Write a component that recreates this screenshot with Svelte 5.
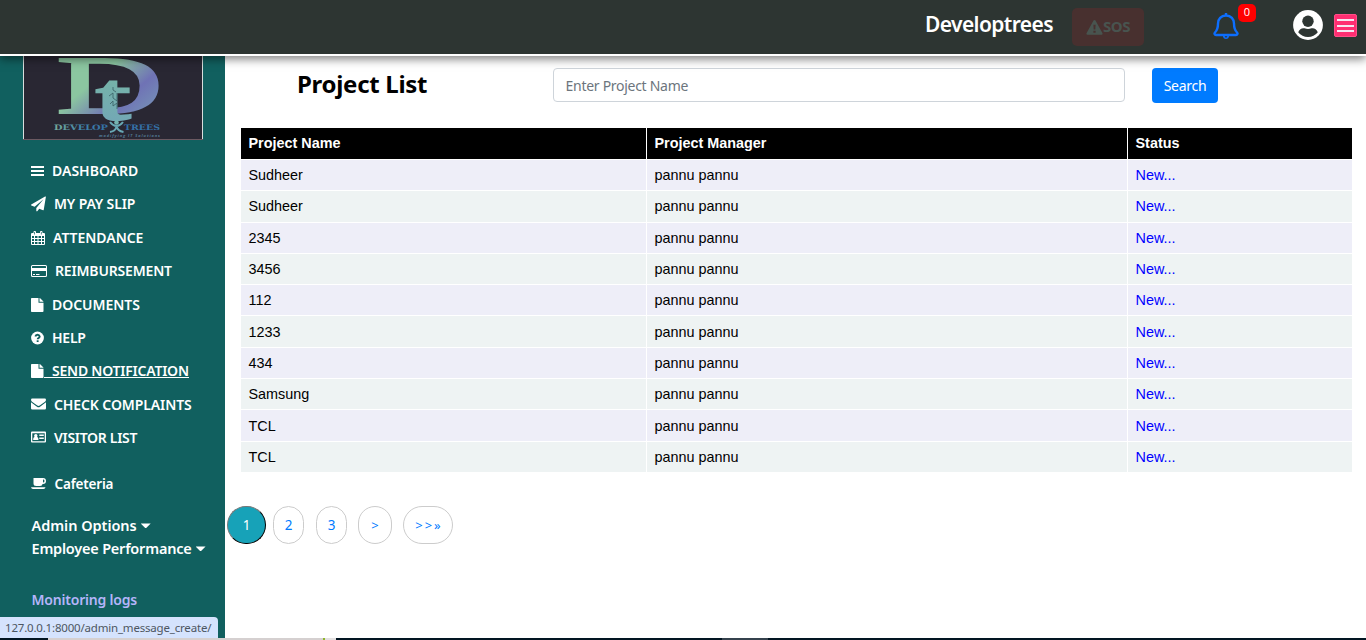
<script>
  const links = [
    { icon: 'bars', label: 'DASHBOARD', gap: 8, w: 13, ls: 0 },
    { icon: 'plane', label: 'MY PAY SLIP', gap: 8, w: 15, ls: -0.15 },
    { icon: 'calendar', label: 'ATTENDANCE', gap: 8, w: 14, ls: -0.04 },
    { icon: 'card', label: 'REIMBURSEMENT', gap: 8, w: 16, ls: -0.17 },
    { icon: 'file', label: 'DOCUMENTS', gap: 8, w: 13, ls: -0.05 },
    { icon: 'help', label: 'HELP', gap: 8, w: 13, ls: -0.25 },
    { icon: 'file', label: 'SEND NOTIFICATION', gap: 8, w: 13, ls: -0.23, hovered: true },
    { icon: 'mail', label: 'CHECK COMPLAINTS', gap: 8, w: 15, ls: -0.1 },
    { icon: 'idcard', label: 'VISITOR LIST', gap: 8, w: 15, ls: -0.3 }
  ];
  const projects = ['Sudheer', 'Sudheer', '2345', '3456', '112', '1233', '434', 'Samsung', 'TCL', 'TCL'];
</script>

{#snippet glyph(name)}
  <svg class="glyph" width="16" height="16" viewBox="0 0 16 16" fill="#fff">
    {#if name === 'bars'}
      <path d="M0 3h13v2H0zM0 7h13v2H0zM0 11h13v2H0z" />
    {:else if name === 'plane'}
      <path transform="translate(0 .5) scale(.0083)" d="M1764 11q33 24 27 64l-256 1536q-5 29-32 45-14 8-31 8-11 0-24-5l-453-185-242 295q-18 23-49 23-13 0-22-4-19-7-30.5-23.5t-11.500-36.500v-349l864-1059-1069 925-395-162q-37-14-40-55-2-40 32-59l1664-960q15-9 32-9 20 0 36 11z" />
    {:else if name === 'calendar'}
      <path fill-rule="evenodd" d="M1 3h1.500V2q0-1 1-1h.5q1 0 1 1v1h4V2q0-1 1-1h.5q1 0 1 1v1H13q1 0 1 1v10q0 1-1 1H1q-1 0-1-1V4q0-1 1-1zM1 6v2h2V6zm3 0v2h2.500V6zm3.500 0v2H10V6zM11 6v2h2V6zM1 9v2h2V9zm3 0v2h2.500V9zm3.500 0v2H10V9zM11 9v2h2V9zM1 12v2h2v-2zm3 0v2h2.500v-2zm3.500 0v2H10v-2zm3.500 0v2h2v-2z" />
      <path d="M3.200 2h.7v2.500h-.7zM9.900 2h.7v2.500h-.7z" fill="#11605f" />
    {:else if name === 'card'}
      <path fill-rule="evenodd" d="M1.500 2h13Q16 2 16 3.500v9q0 1.500-1.500 1.500h-13Q0 14 0 12.500v-9Q0 2 1.500 2zM1 3.500V5h14V3.500L14.500 3h-13zM1 8v4.500l.5.5h13l.5-.5V8zM2 11h2v1H2zm3 0h3.500v1H5z" />
    {:else if name === 'file'}
      <path d="M0 1.800Q0 1 .8 1H7.500v4.700h5V14q0 1-.8 1H.8Q0 15 0 14.200zM8.500 1q.5 0 1 .5l2.700 2.700q.3.300.3.600H8.500z" />
    {:else if name === 'help'}
      <circle cx="6.500" cy="8" r="6.400" />
      <path d="M4.400 6.500Q4.700 4.700 6.500 4.700T8.700 6.500Q8.700 7.400 7.500 8.100 6.700 8.500 6.700 9.300" fill="none" stroke="#11605f" stroke-width="1.900" />
      <path d="M5.700 10.300h1.900V12H5.700z" fill="#11605f" />
    {:else if name === 'mail'}
      <path d="M1.200 1.500h12.600Q15 1.500 15 2.800 15 4 13.700 5L8.700 8.600Q7.500 9.300 6.300 8.600L1.300 5Q0 4 0 2.800 0 1.500 1.200 1.500z" />
      <path d="M0 5.300l6 4.400q1.500 1 3 0l6-4.400v6q0 1.200-1.200 1.200H1.200Q0 12.500 0 11.300z" />
    {:else if name === 'idcard'}
      <path fill-rule="evenodd" d="M1 1.500h13q1 0 1 1v9q0 1-1 1H1q-1 0-1-1v-9q0-1 1-1zM1.300 3.200v8h12.400v-8z" />
      <circle cx="4.800" cy="5.700" r="1.700" />
      <path d="M2.200 10V8.800Q2.500 7.200 3.600 7h2.400q1.200.2 1.400 1.800V10zM8.300 4.500H12.800V6H8.300zM8.300 7.500h4.500V9H8.300z" />
    {:else if name === 'cup'}
      <path fill-rule="evenodd" d="M2.500 2H12q3 .1 3 2.900T12 8h-.4q-.4 2-2.500 2H5.200Q2.500 10 2.500 7.500zM12 3.500v3q1.500-.1 1.500-1.600T12 3.500zM0 11.300h14.500Q14.200 13 12.500 13H2Q.3 13 0 11.300z" />
    {/if}
  </svg>
{/snippet}

<div class="page">
  <header>
    <div class="brand">Developtrees</div>
    <button class="sos">
      <svg width="17" height="15" viewBox="0 0 17 15"><path d="M8.500 0q.7 0 1 .6l7 12.600q.5 1.300-.8 1.500H1.300Q0 14.500.5 13.200L7.500.6Q7.800 0 8.500 0z" fill="#48544f" /><path d="M7.400 4.800h2.200l-.3 4.700H7.700zM7.400 10.800h2.200v2H7.400z" fill="#48302f" /></svg><span>SOS</span>
    </button>
    <div class="bell">
      <svg width="26" height="28" viewBox="0 0 26 28" fill="none" stroke="#0d6efd" stroke-width="2.400" stroke-linejoin="round">
        <path d="M13 1v3M13 3.500C8 3.500 5 7 5 11.500c0 5-1.300 7.300-3 9-1 1.100-.4 2.500 1 2.500h20c1.400 0 2-1.400 1-2.500-1.700-1.700-3-4-3-9 0-4.500-3-8-8-8z" />
        <path d="M9.800 23.500q.4 3.500 3.200 3.500t3.200-3.500z" fill="#0d6efd" stroke="none" /><path d="M11.700 24.200h2.600q-.2 1.200-1.300 1.200t-1.300-1.200z" fill="#2d3532" stroke="none" />
      </svg>
      <span class="badge">0</span>
    </div>
    <svg class="user" width="30" height="30" viewBox="0 0 30 30"><circle cx="15" cy="15" r="14.900" fill="#fff" /><circle cx="15" cy="11.200" r="5.700" fill="#2d3532" /><path d="M5.200 22.200Q7.300 17.500 11.500 18.300q3.500 1.200 7 0 4.200-.8 6.300 3.900Q21 27 15 27T5.200 22.200z" fill="#2d3532" /></svg>
    <div class="menu"><i></i><i></i><i></i></div>
  </header>

  <div class="body">
    <aside>
      <svg class="logo" width="180" height="84" viewBox="0 0 180 84">
        <defs>
          <linearGradient id="letter" x1="0" y1="0" x2="1" y2="1"><stop offset=".4" stop-color="#8bc6a0" /><stop offset=".65" stop-color="#6f72b5" /><stop offset="1" stop-color="#7aa9b9" /></linearGradient>
          <linearGradient id="stem" x1="0" y1="0" x2="0" y2="1"><stop offset="0" stop-color="#77b8a4" /><stop offset="1" stop-color="#72a5b8" /></linearGradient>
          <linearGradient id="name" x1="0" x2="1"><stop offset="0" stop-color="#78aa98" /><stop offset=".5" stop-color="#4185ac" /><stop offset="1" stop-color="#326da5" /></linearGradient>
        </defs>
        <rect width="180" height="84" fill="#292733" />
        <path d="M.5 0v83.500M179.500 0v83.500" stroke="#d9dedd" />
        <path d="M0 83.500h180" stroke="#6b5961" />
        <text transform="translate(33.500 57) scale(1.790 1)" font-size="82" font-family="Liberation Serif" fill="url(#letter)" stroke="url(#letter)" stroke-width="2.200">D</text>
        <text transform="translate(74 63) scale(1.800 1)" font-size="65" font-family="Liberation Serif" fill="url(#stem)" stroke="url(#stem)" stroke-width="3">t</text>
        <path d="M86 40l4-3v5l4 3v-8M87 48l3-3v5l4-3v6M90 31v3l3 2" fill="none" stroke="#385f64" stroke-width=".8" />
        <text x="31" y="73.500" font-size="7.500" font-weight="700" font-family="DejaVu Serif" fill="url(#name)" textLength="54" lengthAdjust="spacingAndGlyphs">DEVELOP</text>
        <text x="101" y="73.500" font-size="7.500" font-weight="700" font-family="DejaVu Serif" fill="#3470a7" textLength="36" lengthAdjust="spacingAndGlyphs">TREES</text>
        <circle cx="93.500" cy="66.500" r="2.300" fill="#75b4b1" />
        <path d="M87 66q3 4 6.500 4t6.500-4M87 76q6-1 6.500-6 1 5 7 6" fill="none" stroke="#68a8b5" stroke-width="2" />
        <text x="76" y="80.500" font-size="4" font-style="italic" font-weight="700" font-family="Open Sans" fill="#527a94" textLength="61">modifying IT Solutions</text>
      </svg>

      <nav>
        {#each links as l}
          <a class:hovered={l.hovered}>
            <span class="icon" style:width="{l.w}px">{@render glyph(l.icon)}</span><span class="text" style:padding-left="{l.gap}px" style:letter-spacing="{l.ls}px">{l.label}</span>
          </a>
        {/each}
      </nav>
      <a class="cafe"><span class="icon">{@render glyph('cup')}</span><span>Cafeteria</span></a>
      <div class="drop first">Admin Options<i></i></div>
      <div class="drop second">Employee Performance<i></i></div>
      <div class="logs">Monitoring logs</div>
      <div class="status">127.0.0.1:8000/admin_message_create/</div>
    </aside>

    <main>
      <div class="search">
        <h1>Project List</h1>
        <input placeholder="Enter Project Name" />
        <button>Search</button>
      </div>
      <div class="table">
        <div class="row head"><div>Project Name</div><div>Project Manager</div><div>Status</div></div>
        {#each projects as p}
          <div class="row"><div>{p}</div><div>pannu pannu</div><div class="new">New...</div></div>
        {/each}
      </div>
      <div class="pages">
        <span class="on">1</span><span class="p2">2</span><span class="p3">3</span><span class="next">&gt;</span><span class="last">&gt;&gt;»</span>
      </div>
    </main>
  </div>
  <footer><i class="dark"></i><i class="light"></i><i class="green"></i><i class="pale"></i><i class="navy"></i><i class="grey"></i><i class="rest"></i></footer>
</div>

<style>
  :global(body) { margin: 0; overflow: hidden; }
  * { box-sizing: border-box; }
  .page { width: 1366px; height: 640px; display: flex; flex-direction: column; background: #fff; font-family: "Noto Sans", "Open Sans", sans-serif; overflow: hidden; }
  header { height: 56px; flex: none; background: #2d3532; border-bottom: 2px solid #fff; box-shadow: 0 3px 9px rgba(0, 0, 0, .5); display: flex; align-items: flex-start; position: relative; z-index: 2; }
  .brand { margin: 9px 0 0 925px; width: 147px; font-size: 21px; line-height: 30px; font-weight: 600; letter-spacing: -.6px; color: #fff; white-space: nowrap; }
  .sos { margin-top: 8px; width: 72px; height: 38px; border: 0; border-radius: 5px; background: #48302f; color: #48544f; font: 700 15px/36px "Noto Sans", sans-serif; letter-spacing: -.5px; padding: 0; display: flex; align-items: center; justify-content: center; }
  .sos span { height: 38px; }
  .bell { margin: 12px 0 0 69px; width: 80px; position: relative; height: 28px; }
  .bell svg { display: block; }
  .badge { position: absolute; left: 25px; top: -8px; width: 18px; height: 18px; border-radius: 5px; background: #f00; color: #fff; font: 11px/15px "Open Sans", sans-serif; text-align: center; }
  .user { margin-top: 10px; }
  .menu { margin: 14px 0 0 11px; width: 23px; height: 23px; border: 1px solid #ff4f88; border-radius: 2px; background: #ff2e72; padding: 4px 2px; display: flex; flex-direction: column; justify-content: space-between; }
  .menu i { height: 2px; flex: none; background: #f5e6f2; }
  .body { height: 582px; flex: none; display: flex; }
  aside { width: 225px; background: #11605f; color: #fff; display: flex; flex-direction: column; flex: none; }
  .logo { margin-left: 23px; flex: none; display: block; }
  nav { margin-top: 14.400px; height: 300px; display: grid; grid-template-rows: repeat(9, 33.370px); }
  nav a { margin-left: 31px; display: flex; align-items: center; font-size: 14px; font-weight: 600; white-space: nowrap; line-height: 20px; }
  .icon { flex: none; height: 16px; }
  .glyph { display: block; overflow: visible; }
  .hovered { position: relative; }
  .hovered::after { content: ""; position: absolute; left: 13px; width: 145px; bottom: 10px; height: 1px; background: #fff; }
  .cafe { margin: 20px 0 0 31px; height: 20px; display: flex; align-items: center; font-size: 13.500px; font-weight: 600; letter-spacing: -.18px; }
  .cafe .icon { width: 23.500px; }
  .drop { margin-left: 31.500px; height: 23px; line-height: 23px; font-size: 14.500px; font-weight: 600; white-space: nowrap; display: flex; align-items: center; }
  .drop i { margin-left: 4px; width: 10px; height: 5px; background: #fff; clip-path: polygon(0 0, 100% 0, 50% 100%); }
  .first { margin-top: 20px; letter-spacing: -.04px; }
  .second { letter-spacing: -.21px; }
  .logs { margin: 30px 0 0 31.500px; height: 20px; font-size: 14px; line-height: 20px; font-weight: 600; letter-spacing: -.2px; color: #b5b5fa; }
  .status { margin-top: auto; width: 218px; height: 21px; background: #d5e3fd; border-radius: 0 4px 0 0; padding-left: 5px; font: 11.500px/21px "Noto Sans", sans-serif; letter-spacing: -.19px; color: #4d5661; white-space: nowrap; }
  main { flex: 1; min-width: 0; }
  .search { display: flex; align-items: flex-start; padding: 12px 0 0 72px; height: 72px; }
  h1 { margin: -1px 0 0; width: 256px; font-size: 24px; line-height: 33px; font-weight: 700; letter-spacing: -.3px; color: #000; }
  input { width: 572px; height: 34px; border: 1px solid #ced4da; border-radius: 4px; padding: 0 11.500px; margin: 0; font: 14px "Noto Sans", sans-serif; letter-spacing: -.28px; }
  input::placeholder { color: #6c757d; opacity: 1; }
  .search button { margin-left: 27px; width: 66px; height: 35px; border: 0; border-radius: 4px; background: #007bff; color: #fff; font: 14px "Noto Sans", sans-serif; letter-spacing: -.3px; padding: 0; }
  .table { margin-left: 16px; width: 1111px; height: 344px; display: grid; grid-template-rows: 31px repeat(10, 30.300px); row-gap: 1px; font: 14.400px "Liberation Sans", sans-serif; color: #000; }
  .row { display: grid; grid-template-columns: 405px 480px 224px; column-gap: 1px; }
  .row div { padding-left: 7.500px; background: #eef3f3; display: flex; align-items: center; }
  .row:nth-child(even) div { background: #eeeef8; }
  .row.head div { background: #000; color: #fff; font-weight: 700; padding-bottom: 1px; }
  .row .new { color: #00f; }
  .pages { margin: 34px 0 0 2px; display: flex; }
  .pages span { height: 38px; width: 31px; border: 1px solid #ccc; border-radius: 19px; line-height: 36px; text-align: center; font-size: 13.500px; color: #007bff; }
  .pages .on { width: 39px; background: #17a2b8; border: 1px outset #222; color: #fff; margin-right: 7px; }
  .pages .p2 { margin-right: 12px; }
  .pages .p3 { margin-right: 11px; }
  .pages .next { width: 34px; margin-right: 11px; font-size: 13px; }
  .pages .last { width: 50px; letter-spacing: 2px; padding-left: 2px; font-size: 13px; }
  footer { height: 2px; display: flex; }
  footer i { height: 2px; background: #021522; }
  footer .dark { width: 48px; }
  footer .light { width: 275px; background: #d5d0d0; }
  footer .green { width: 2px; background: #8eb52b; }
  footer .pale { width: 11px; background: #e3e0e0; }
  footer .navy { width: 386px; }
  footer .grey { width: 46px; background: #35424d; }
  footer .rest { flex: 1; }
</style>
